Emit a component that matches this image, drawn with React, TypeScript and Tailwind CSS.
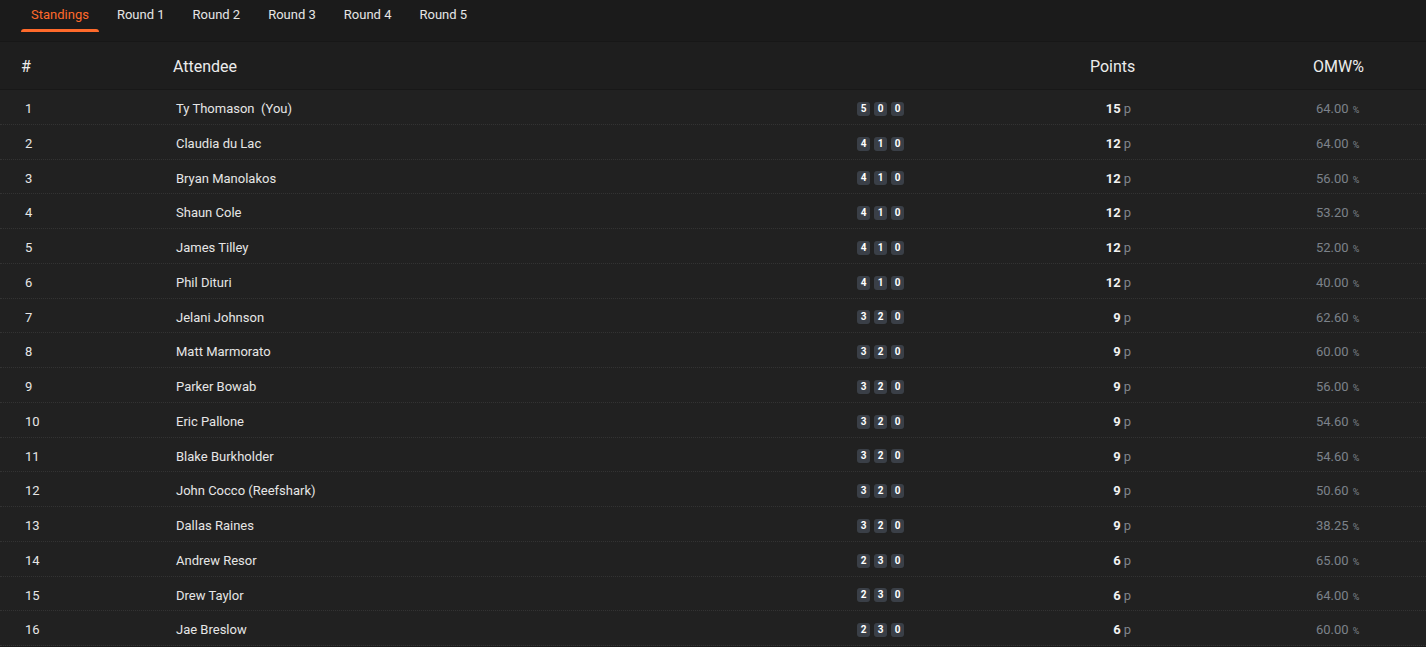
import React from 'react';

interface Standing {
  rank: number;
  name: string;
  record: [number, number, number];
  points: number;
  omw: string;
}

const standings: Standing[] = [
  { rank: 1, name: 'Ty Thomason  (You)', record: [5, 0, 0], points: 15, omw: '64.00' },
  { rank: 2, name: 'Claudia du Lac', record: [4, 1, 0], points: 12, omw: '64.00' },
  { rank: 3, name: 'Bryan Manolakos', record: [4, 1, 0], points: 12, omw: '56.00' },
  { rank: 4, name: 'Shaun Cole', record: [4, 1, 0], points: 12, omw: '53.20' },
  { rank: 5, name: 'James Tilley', record: [4, 1, 0], points: 12, omw: '52.00' },
  { rank: 6, name: 'Phil Dituri', record: [4, 1, 0], points: 12, omw: '40.00' },
  { rank: 7, name: 'Jelani Johnson', record: [3, 2, 0], points: 9, omw: '62.60' },
  { rank: 8, name: 'Matt Marmorato', record: [3, 2, 0], points: 9, omw: '60.00' },
  { rank: 9, name: 'Parker Bowab', record: [3, 2, 0], points: 9, omw: '56.00' },
  { rank: 10, name: 'Eric Pallone', record: [3, 2, 0], points: 9, omw: '54.60' },
  { rank: 11, name: 'Blake Burkholder', record: [3, 2, 0], points: 9, omw: '54.60' },
  { rank: 12, name: 'John Cocco (Reefshark)', record: [3, 2, 0], points: 9, omw: '50.60' },
  { rank: 13, name: 'Dallas Raines', record: [3, 2, 0], points: 9, omw: '38.25' },
  { rank: 14, name: 'Andrew Resor', record: [2, 3, 0], points: 6, omw: '65.00' },
  { rank: 15, name: 'Drew Taylor', record: [2, 3, 0], points: 6, omw: '64.00' },
  { rank: 16, name: 'Jae Breslow', record: [2, 3, 0], points: 6, omw: '60.00' },
];

const tabs = ['Standings', 'Round 1', 'Round 2', 'Round 3', 'Round 4', 'Round 5'];

function RecordBadge({ value }: { value: number }) {
  return (
    <span className="flex items-center justify-center w-[13px] h-[14px] rounded-[3px] bg-[#3a3f47] text-[10px] font-bold text-white leading-none">
      {value}
    </span>
  );
}

export default function App() {
  return (
    <div className="w-[1426px] h-[647px] overflow-hidden bg-[#1b1b1b] font-['Roboto',sans-serif]">
      {/* tabs */}
      <div className="flex gap-[8px] pl-[21px] h-[42px] border-b border-[#171717]">
        {tabs.map((tab, i) => (
          <div key={tab} className="relative h-[32px] flex justify-center px-[10px] pt-[5px]">
            <span className={`text-[13px] ${i === 0 ? 'text-[#ff6a2b]' : 'text-[#e6e6e6]'}`}>{tab}</span>
            {i === 0 && (
              <span className="absolute left-0 right-0 bottom-0 h-[3px] rounded-t-[3px] bg-[#ff6a2b]" />
            )}
          </div>
        ))}
      </div>

      {/* header */}
      <div className="flex items-center h-[48px] pl-[21px] pt-[2px] bg-[#1e1e1e] border-b border-[#181818] text-[16px] text-[#ececec]">
        <div className="w-[152px]">#</div>
        <div className="w-[917px]">Attendee</div>
        <div className="w-[223px]">Points</div>
        <div>OMW%</div>
      </div>

      {/* rows */}
      <div className="bg-[#212121]">
        {standings.map((s) => (
          <div
            key={s.rank}
            className="flex items-center h-[34.75px] pl-[25px] pt-[4px] border-b border-dotted border-[#333] text-[13px] text-[#e6e6e6]"
          >
            <div className="w-[151px]">{s.rank}</div>
            <div className="w-[681px] whitespace-pre">{s.name}</div>
            <div className="w-[200px] flex gap-[4px]">
              {s.record.map((r, i) => (
                <RecordBadge key={i} value={r} />
              ))}
            </div>
            <div className="w-[74px] text-right">
              <span className="font-bold text-[#f2f2f2]">{s.points}</span>
              <span className="text-[#80858c] ml-[3px]">p</span>
            </div>
            <div className="w-[185px]" />
            <div className="text-[#7c828a]">
              {s.omw}
              <span className="text-[9px] ml-[4px]">%</span>
            </div>
          </div>
        ))}
      </div>
    </div>
  );
}
